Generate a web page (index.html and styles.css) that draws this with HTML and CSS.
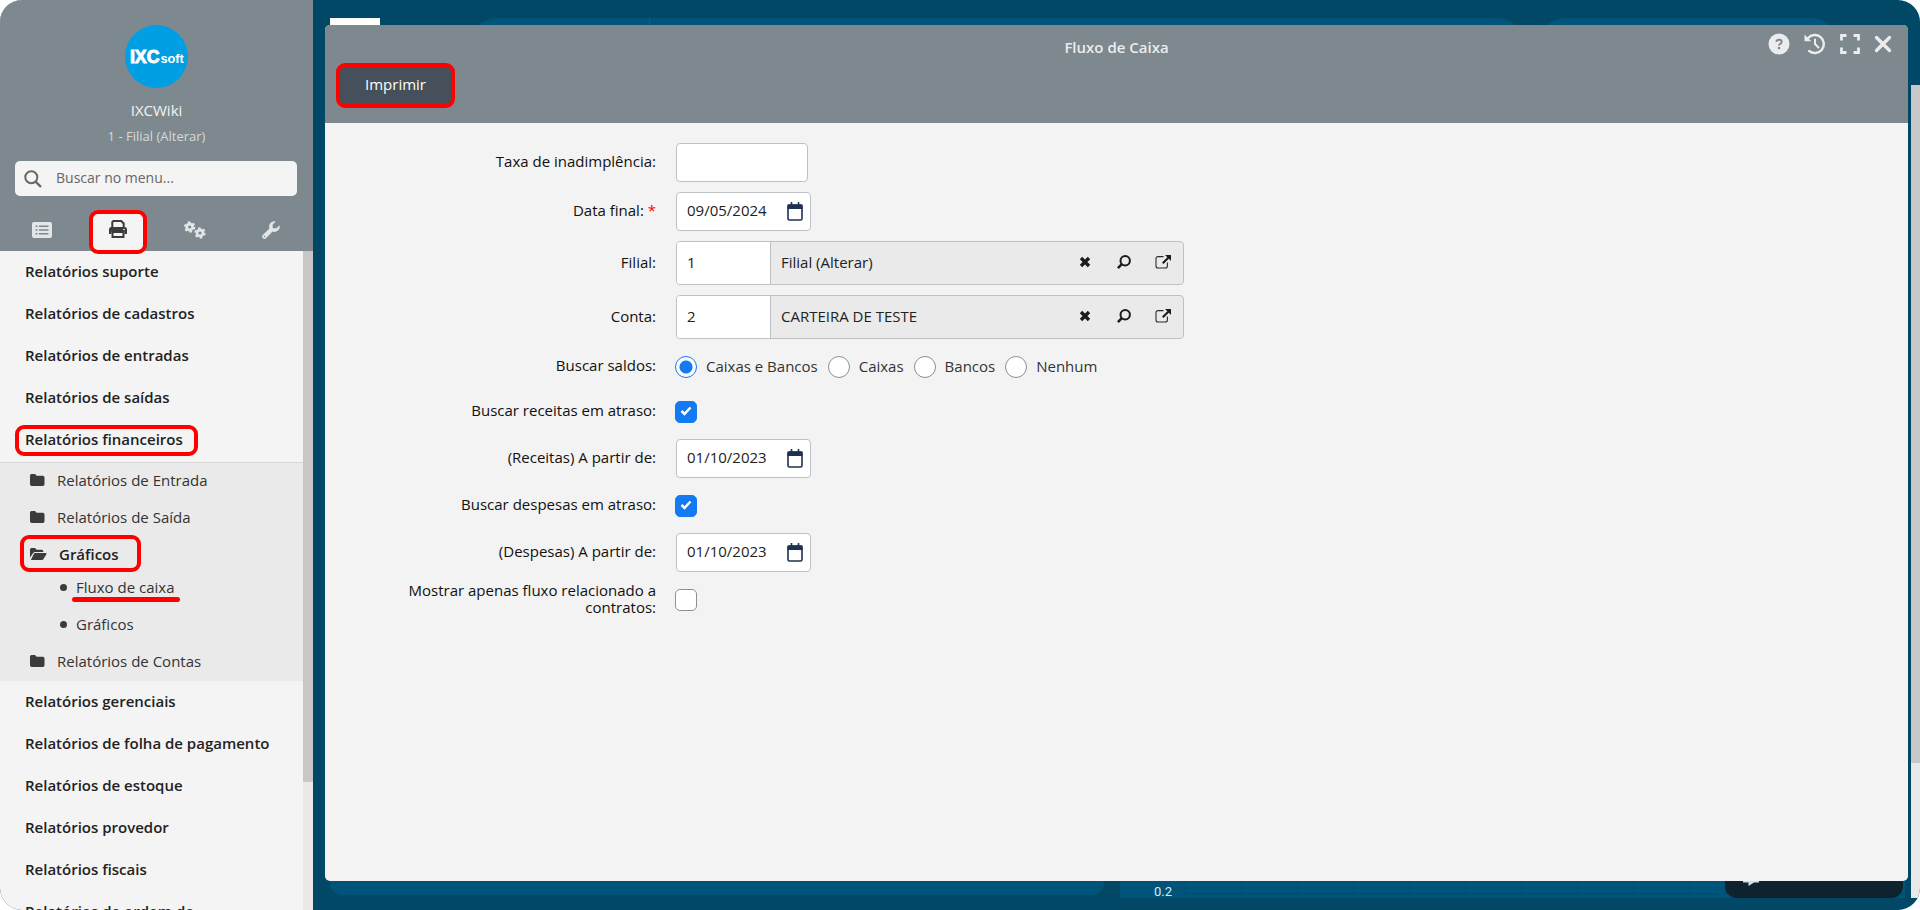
FILE: index.html
```html
<!DOCTYPE html>
<html lang="pt-BR">
<head>
<meta charset="utf-8">
<title>Fluxo de Caixa</title>
<link rel="stylesheet" href="styles.css">
</head>
<body>
<svg class="defs" aria-hidden="true">
  <symbol id="folder" viewBox="0 0 15 12"><path d="M1.5 0H5l1.6 1.8h6.2A1.7 1.7 0 0 1 14.500 3.500v6.800a1.700 1.700 0 0 1-1.700 1.700H1.700A1.700 1.700 0 0 1 0 10.300V1.500A1.500 1.500 0 0 1 1.500 0z"/></symbol>
  <symbol id="folder-open" viewBox="0 0 17 12"><path d="M1.500 0H5l1.600 1.800h5.200a1.500 1.500 0 0 1 1.500 1.500v.7H5.300a2.600 2.600 0 0 0-2.300 1.300L0 9.500v-8A1.500 1.500 0 0 1 1.500 0z"/><path d="M5.300 4.900h10.300c.8 0 1.200.7.800 1.300l-2.900 4.900c-.3.600-.9.900-1.600.9H.9l3.100-6.400c.3-.5.700-.7 1.300-.7z"/></symbol>
  <symbol id="calendar" viewBox="0 0 16 19"><path d="M4.500 0v4M11.500 0v4" stroke="#1d3150" stroke-width="1.600"/><rect x="1" y="3" width="14" height="15" rx="1.500" fill="#fff" stroke="#1d3150" stroke-width="1.600"/><path d="M.5 2.500h15V7H.5z" fill="#1d3150"/></symbol>
  <symbol id="clear" viewBox="0 0 12 12"><path d="M2 2l8 8M10 2l-8 8" stroke="#1c1c1c" stroke-width="3.400" fill="none"/></symbol>
  <symbol id="lookup" viewBox="0 0 14 14"><circle cx="8.200" cy="5.800" r="4.700" fill="none" stroke="#1c1c1c" stroke-width="2"/><path d="M4.800 9.200L.9 13.100" stroke="#1c1c1c" stroke-width="2.600"/></symbol>
  <symbol id="external" viewBox="0 0 16 14"><path d="M8.500 1.600H3A2 2 0 0 0 1 3.600v7.400a2 2 0 0 0 2 2h7.400a2 2 0 0 0 2-2V7.500" fill="none" stroke="#2a2a2a" stroke-width="1.100"/><path d="M10 0h6v6l-2.200-2.200-5.300 5.300-1.500-1.500L12.300 2.300z" fill="#1c1c1c"/></symbol>
</svg>

<div class="app">
  <aside class="sidebar">
    <header class="profile">
      <svg class="logo" viewBox="0 0 64 64" role="img" aria-label="IXCsoft"><circle cx="32" cy="32" r="32" fill="#009fe3"/><text x="5" y="39" class="logo-big">IXC</text><text x="36" y="39" class="logo-small">soft</text></svg>
      <strong class="user">IXCWiki</strong>
      <a class="branch" href="#">1 - Filial (Alterar)</a>
      <label class="search">
        <svg width="18" height="18" viewBox="0 0 18 18"><circle cx="7.300" cy="7.300" r="6" fill="none" stroke="#666" stroke-width="2"/><path d="M11.800 11.800L17 17" stroke="#666" stroke-width="2.400"/></svg>
        <input type="search" placeholder="Buscar no menu..." aria-label="Buscar no menu">
      </label>
      <nav class="tabs">
        <button class="tab" aria-label="Cadastros"><svg width="20" height="16" viewBox="0 0 20 16"><rect width="20" height="16" rx="2" fill="#e3e6e7"/><path d="M3.500 4.200h2M3.500 8h2M3.500 11.800h2M7 4.200h9.500M7 8h9.500M7 11.800h9.500" stroke="#7d898e" stroke-width="1.500"/></svg></button>
        <button class="tab tab-active" aria-label="Relatórios"><span class="tab-face"><svg width="18" height="18" viewBox="0 0 18 18"><path d="M3.300 7V2.300A1.300 1.300 0 0 1 4.600 1h7.600l2.500 2.500V7" fill="none" stroke="#3b3b3b" stroke-width="2"/><path d="M2.500 7h13A2.500 2.500 0 0 1 18 9.500V14h-2.500v-2.500h-13V14H0V9.500A2.500 2.500 0 0 1 2.500 7z" fill="#3b3b3b"/><path d="M3.500 12h11v5h-11z" fill="none" stroke="#3b3b3b" stroke-width="2"/><circle cx="15" cy="9.500" r=".8" fill="#f4f4f4"/></svg></span></button>
        <button class="tab" aria-label="Sistema"><svg width="22" height="18" viewBox="0 0 22 18" fill="none" stroke="#e3e6e7"><circle cx="5.700" cy="6" r="3" stroke-width="2.800"/><circle cx="5.700" cy="6" r="4.700" stroke-width="1.900" stroke-dasharray="2.460 2.460"/><circle cx="16" cy="12" r="3" stroke-width="2.800"/><circle cx="16" cy="12" r="4.700" stroke-width="1.900" stroke-dasharray="2.460 2.460"/></svg></button>
        <button class="tab" aria-label="Configurações"><svg width="18" height="18" viewBox="0 0 18 18"><path d="M17.600 4.300a5.400 5.400 0 0 1-7.100 6.300L4 17.200a2.200 2.200 0 0 1-3.200-3.200l6.600-6.500A5.400 5.400 0 0 1 13.700.4L10.700 3.500v3.700h3.700z" fill="#e3e6e7"/><circle cx="2.500" cy="15.500" r=".8" fill="#7d898e"/></svg></button>
      </nav>
    </header>
    <div class="menu-area">
      <ul class="menu">
        <li><a class="item" href="#">Relatórios suporte</a></li>
        <li><a class="item" href="#">Relatórios de cadastros</a></li>
        <li><a class="item" href="#">Relatórios de entradas</a></li>
        <li><a class="item" href="#">Relatórios de saídas</a></li>
        <li><a class="item" href="#"><span class="mark-host">Relatórios financeiros<i class="mark"></i></span></a>
          <ul class="submenu">
            <li><a class="sub" href="#"><svg width="15" height="12"><use href="#folder"/></svg>Relatórios de Entrada</a></li>
            <li><a class="sub" href="#"><svg width="15" height="12"><use href="#folder"/></svg>Relatórios de Saída</a></li>
            <li><a class="sub open" href="#"><svg width="17" height="12"><use href="#folder-open"/></svg>Gráficos<i class="mark mark-open"></i></a>
              <ul class="leafs">
                <li><a class="leaf" href="#"><span class="mark-host">Fluxo de caixa<i class="underline"></i></span></a></li>
                <li><a class="leaf" href="#">Gráficos</a></li>
              </ul>
            </li>
            <li><a class="sub" href="#"><svg width="15" height="12"><use href="#folder"/></svg>Relatórios de Contas</a></li>
          </ul>
        </li>
        <li><a class="item" href="#">Relatórios gerenciais</a></li>
        <li><a class="item" href="#">Relatórios de folha de pagamento</a></li>
        <li><a class="item" href="#">Relatórios de estoque</a></li>
        <li><a class="item" href="#">Relatórios provedor</a></li>
        <li><a class="item" href="#">Relatórios fiscais</a></li>
        <li><a class="item" href="#">Relatórios de ordem de</a></li>
      </ul>
      <div class="track"><div class="thumb"></div></div>
    </div>
  </aside>

  <main class="desk">
    <div class="board">
      <div class="board-top"><div class="tile"></div><div class="card card-a"></div><div class="card card-b"></div></div>
      <div class="board-bottom">
        <div class="card panel"></div>
        <div class="chart"><span class="tick">0.2</span><div class="grid"></div>
          <div class="chat"><svg width="16" height="8" viewBox="0 0 16 8"><path d="M0 0h16v1.500h-5L5.500 5V1.500H0z" fill="#c4e2f2"/></svg></div>
        </div>
      </div>
    </div>
    <div class="page-track"><div class="page-thumb"></div></div>

    <section class="modal" role="dialog" aria-labelledby="title">
      <header class="modal-head">
        <div class="title-bar">
          <h1 id="title">Fluxo de Caixa</h1>
          <div class="tools">
            <button aria-label="Ajuda"><svg width="22" height="22" viewBox="0 0 22 22"><circle cx="11" cy="11" r="10.500" fill="#ececec"/><path d="M8.300 8.800q.2-2.100 2.800-2.100 2.600.1 2.600 2.100 0 1.300-1.500 2-1.200.5-1.200 1.600" fill="none" stroke="#7d898e" stroke-width="1.900"/><circle cx="11" cy="15" r="1.300" fill="#7d898e"/></svg></button>
            <button aria-label="Histórico"><svg width="22" height="22" viewBox="0 0 22 22"><path d="M4 5.200A9 9 0 1 1 5.200 18" fill="none" stroke="#ececec" stroke-width="2.400" stroke-linecap="round"/><path d="M.5 1.500v6.800h6.800z" fill="#ececec"/><path d="M11 6.500V11l3.500 3.500" fill="none" stroke="#ececec" stroke-width="2" stroke-linecap="round"/></svg></button>
            <button aria-label="Maximizar"><svg width="20" height="20" viewBox="0 0 20 20"><path d="M1.500 6.500v-5h5M13.500 1.500h5v5M18.500 13.500v5h-5M6.500 18.500h-5v-5" fill="none" stroke="#ececec" stroke-width="2.800"/></svg></button>
            <button aria-label="Fechar"><svg width="18" height="18" viewBox="0 0 18 18"><path d="M2.500 2.500l13 13M15.500 2.500l-13 13" stroke="#ececec" stroke-width="3.300" stroke-linecap="round"/></svg></button>
          </div>
        </div>
        <button class="print">Imprimir</button>
      </header>
      <form class="form">
        <label class="label" for="taxa">Taxa de inadimplência:</label>
        <input class="box rate" id="taxa" type="text">

        <label class="label" for="data">Data final: <span class="req">*</span></label>
        <div class="box date"><input id="data" type="text" value="09/05/2024"><svg width="16" height="19"><use href="#calendar"/></svg></div>

        <label class="label" for="filial">Filial:</label>
        <div class="box lookup"><input class="code" id="filial" type="text" value="1"><input class="name" type="text" value="Filial (Alterar)" aria-label="Nome da filial" readonly>
          <div class="actions"><button type="button" aria-label="Limpar"><svg width="12" height="12"><use href="#clear"/></svg></button><button type="button" aria-label="Pesquisar"><svg width="14" height="14"><use href="#lookup"/></svg></button><button type="button" aria-label="Abrir"><svg width="16" height="14"><use href="#external"/></svg></button></div></div>

        <label class="label" for="conta">Conta:</label>
        <div class="box lookup"><input class="code" id="conta" type="text" value="2"><input class="name" type="text" value="CARTEIRA DE TESTE" aria-label="Nome da conta" readonly>
          <div class="actions"><button type="button" aria-label="Limpar"><svg width="12" height="12"><use href="#clear"/></svg></button><button type="button" aria-label="Pesquisar"><svg width="14" height="14"><use href="#lookup"/></svg></button><button type="button" aria-label="Abrir"><svg width="16" height="14"><use href="#external"/></svg></button></div></div>

        <span class="label" id="saldos">Buscar saldos:</span>
        <div class="toggle" role="radiogroup" aria-labelledby="saldos">
          <label class="choice"><input type="radio" name="saldo" checked><span>Caixas e Bancos</span></label>
          <label class="choice"><input type="radio" name="saldo"><span>Caixas</span></label>
          <label class="choice"><input type="radio" name="saldo"><span>Bancos</span></label>
          <label class="choice"><input type="radio" name="saldo"><span>Nenhum</span></label>
        </div>

        <label class="label" for="receitas">Buscar receitas em atraso:</label>
        <div class="toggle"><span class="check"><input id="receitas" type="checkbox" checked><svg class="tickmark" width="12" height="10" viewBox="0 0 12 10"><path d="M1.500 5l3 3 6-6.500"/></svg></span></div>

        <label class="label" for="rdata">(Receitas) A partir de:</label>
        <div class="box date"><input id="rdata" type="text" value="01/10/2023"><svg width="16" height="19"><use href="#calendar"/></svg></div>

        <label class="label" for="despesas">Buscar despesas em atraso:</label>
        <div class="toggle"><span class="check"><input id="despesas" type="checkbox" checked><svg class="tickmark" width="12" height="10" viewBox="0 0 12 10"><path d="M1.500 5l3 3 6-6.500"/></svg></span></div>

        <label class="label" for="ddata">(Despesas) A partir de:</label>
        <div class="box date"><input id="ddata" type="text" value="01/10/2023"><svg width="16" height="19"><use href="#calendar"/></svg></div>

        <label class="label" for="contratos">Mostrar apenas fluxo relacionado a contratos:</label>
        <div class="toggle"><input id="contratos" type="checkbox"></div>
      </form>
    </section>
  </main>
</div>
</body>
</html>
```
FILE: styles.css
```css
* { box-sizing: border-box; }
body { margin: 0; background: #fff; font: 15px/20px "Open Sans", "Noto Sans", sans-serif; color: #222; }
button { border: 0; padding: 0; background: none; font: inherit; color: inherit; display: flex; align-items: center; justify-content: center; cursor: pointer; }
input { font: inherit; color: inherit; margin: 0; }
a { color: inherit; text-decoration: none; }
ul { list-style: none; margin: 0; padding: 0; }
svg { flex: none; display: block; }
.defs { position: absolute; width: 0; height: 0; }

.app { display: flex; height: 100vh; overflow: hidden; border-radius: 22px; background: #004866; }

/* Sidebar */
.sidebar { width: 313px; flex: none; display: flex; flex-direction: column; background: #f4f4f4; }
.profile { background: #7d898e; height: 251px; flex: none; padding-top: 25px; display: flex; flex-direction: column; align-items: center; color: #f4f4f4; }
.logo { width: 63px; height: 63px; }
.logo-big { font: bold 18px "Liberation Sans", sans-serif; fill: #fff; stroke: #fff; stroke-width: 1px; }
.logo-small { font: bold 13px "Liberation Sans", sans-serif; fill: #fff; }
.user { margin-top: 12px; font-weight: 500; }
.branch { margin-top: 6px; font-size: 13px; color: #d5dadc; }
.search { margin: 15px 16px 0 15px; align-self: stretch; height: 35px; background: #f4f4f4; border-radius: 5px; display: flex; align-items: center; padding: 0 9px; gap: 14px; }
.search input { flex: 1; min-width: 0; border: 0; background: none; outline: 0; padding: 0 0 2px; font-size: 14px; color: #666; }
.search input::placeholder { color: #666; opacity: 1; }
.tabs { margin: auto 4px 0; align-self: stretch; display: grid; grid-template-columns: repeat(4, 1fr); height: 41px; position: relative; z-index: 1; }
.tab { padding-bottom: 4px; }
.tab-active { align-items: flex-start; padding: 0; }
.tab-face { width: 58px; height: 44px; background: #f4f4f4; display: flex; align-items: center; justify-content: center; border: 4px solid #f00; border-radius: 9px; padding-bottom: 6px; }

.menu-area { flex: 1; min-height: 0; display: flex; }
.menu { flex: 1; overflow: hidden; }
.item { display: flex; align-items: center; height: 42px; padding: 0 25px 3px; font-weight: 600; white-space: nowrap; }
.mark-host { position: relative; }
.mark { position: absolute; inset: -4px -15px -7px -10px; border: 4px solid #f00; border-radius: 9px; }
.submenu { background: #eaeaea; border-top: 1px solid #d8d8d8; margin-top: 1px; }
.sub { position: relative; display: flex; align-items: center; height: 37px; padding: 0 0 3px 30px; gap: 12px; color: #333; }
.sub svg { fill: #3b3b3b; }
.open { font-weight: 600; color: #222; }
.mark-open { inset: -2px auto 2px 20px; width: 121px; }
.leafs { margin-top: -4px; }
.leaf { display: flex; align-items: center; height: 37px; padding: 0 0 3px 60px; gap: 9px; color: #333; }
.leaf::before { content: ""; width: 7px; height: 7px; border-radius: 50%; background: #3b3b3b; }
.underline { position: absolute; left: -4px; right: -5px; top: 20px; height: 5px; border-radius: 3px; background: #f00; }
.track { width: 10px; background: #e8e8e8; }
.thumb { height: 531px; background: #c7c7c7; }

/* Dashboard behind the dialog */
.desk { flex: 1; min-width: 0; position: relative; }
.board { height: 100%; padding: 18px 15px 12px 17px; display: flex; flex-direction: column; justify-content: space-between; }
.board-top { display: flex; height: 60px; }
.tile { width: 50px; background: #fff; }
.card { background: #005479; }
.card-a { flex: 1; margin-left: 90px; border-radius: 27px; background: linear-gradient(90deg, #005479 179px, #0d5f83 179px, #0d5f83 180px, #005479 180px); }
.card-b { width: 301px; margin: 0 66px 0 14px; border-radius: 27px; }
.board-bottom { display: flex; gap: 16px; height: 60px; align-items: flex-start; }
.panel { flex: 1; height: 57px; border-radius: 12px; }
.chart { width: 785px; height: 60px; background: #005479; display: flex; position: relative; }
.tick { width: 65px; padding: 47px 13px 0 0; text-align: right; font: 13px/14px Roboto, sans-serif; color: #dfeaf0; }
.grid { flex: 1; background: repeating-linear-gradient(90deg, #004c6e 0, #004c6e 1px, transparent 1px, transparent 56px), linear-gradient(#004c6e, #004c6e) 0 55px / 100% 1px no-repeat; }
.chat { position: absolute; right: 2px; bottom: 0; width: 178px; height: 40px; padding: 23px 0 0 18px; border-radius: 12px; background: #0e232d; }
.page-track { position: absolute; top: 85px; right: 0; bottom: 12px; width: 9px; background: #e8e8e8; }
.page-thumb { height: 678px; background: #c7c7c7; }

/* Dialog */
.modal { position: absolute; inset: 25px 12px 29px 12px; background: #f3f3f3; border-radius: 5px; overflow: hidden; }
.modal-head { background: #7d898e; padding-bottom: 15px; color: #ececec; }
.title-bar { display: grid; grid-template-columns: 1fr auto 1fr; height: 38px; align-items: center; }
h1 { grid-column: 2; margin: 0; padding-top: 6px; font-size: 15px; line-height: 20px; font-weight: 600; }
.tools { justify-self: end; display: flex; gap: 14px; padding-right: 16px; }
.print { margin-left: 11px; width: 119px; height: 45px; padding-bottom: 4px; background: #46505a; border: 4px solid #f00; border-radius: 9px; font-weight: 500; color: #fff; }

.form { display: grid; grid-template-columns: 250px 1fr; gap: 10px 19px; padding: 20px 20px 20px 81px; align-items: center; justify-items: start; }
.label { justify-self: end; text-align: right; line-height: 17px; padding-bottom: 2px; color: #111; }
.req { color: #f00; }
.box { height: 39px; border: 1px solid #bcc1c6; border-radius: 4px; background: #fff; padding: 0 10px; margin-left: 1px; }
.rate { width: 132px; }
.date { width: 135px; display: flex; align-items: center; justify-content: space-between; padding-right: 7px; }
.date input { width: 90px; border: 0; padding: 0 0 3px; background: none; }
.lookup { width: 508px; height: 44px; display: flex; padding: 0; background: #eaeaea; overflow: hidden; }
.lookup .code { width: 94px; border: 0; border-right: 1px solid #bcc1c6; padding: 0 10px 2px; background: #fff; }
.lookup .name { flex: 1; min-width: 0; border: 0; padding: 0 10px 2px; background: none; }
.actions { display: flex; padding: 0 1px 2px 0; }
.actions button { width: 39px; }
.toggle { min-height: 35px; display: flex; align-items: center; gap: 10px; }
.choice { display: flex; align-items: center; gap: 9px; color: #333; }
.choice span { padding-bottom: 2px; }
.toggle input { appearance: none; width: 22px; height: 22px; border: 1px solid #8a8f98; background: #fff; }
.toggle input[type=radio] { border-radius: 50%; }
.toggle input[type=radio]:checked { border-color: #147af3; background: radial-gradient(circle, #147af3 6px, #fff 7px); }
.toggle input[type=checkbox] { border-radius: 5px; display: block; }
.toggle input[type=checkbox]:checked { border-color: #147af3; background: #147af3; }
.check { position: relative; }
.tickmark { position: absolute; left: 5px; top: 5px; fill: none; stroke: #fff; stroke-width: 2.500; pointer-events: none; }
```
